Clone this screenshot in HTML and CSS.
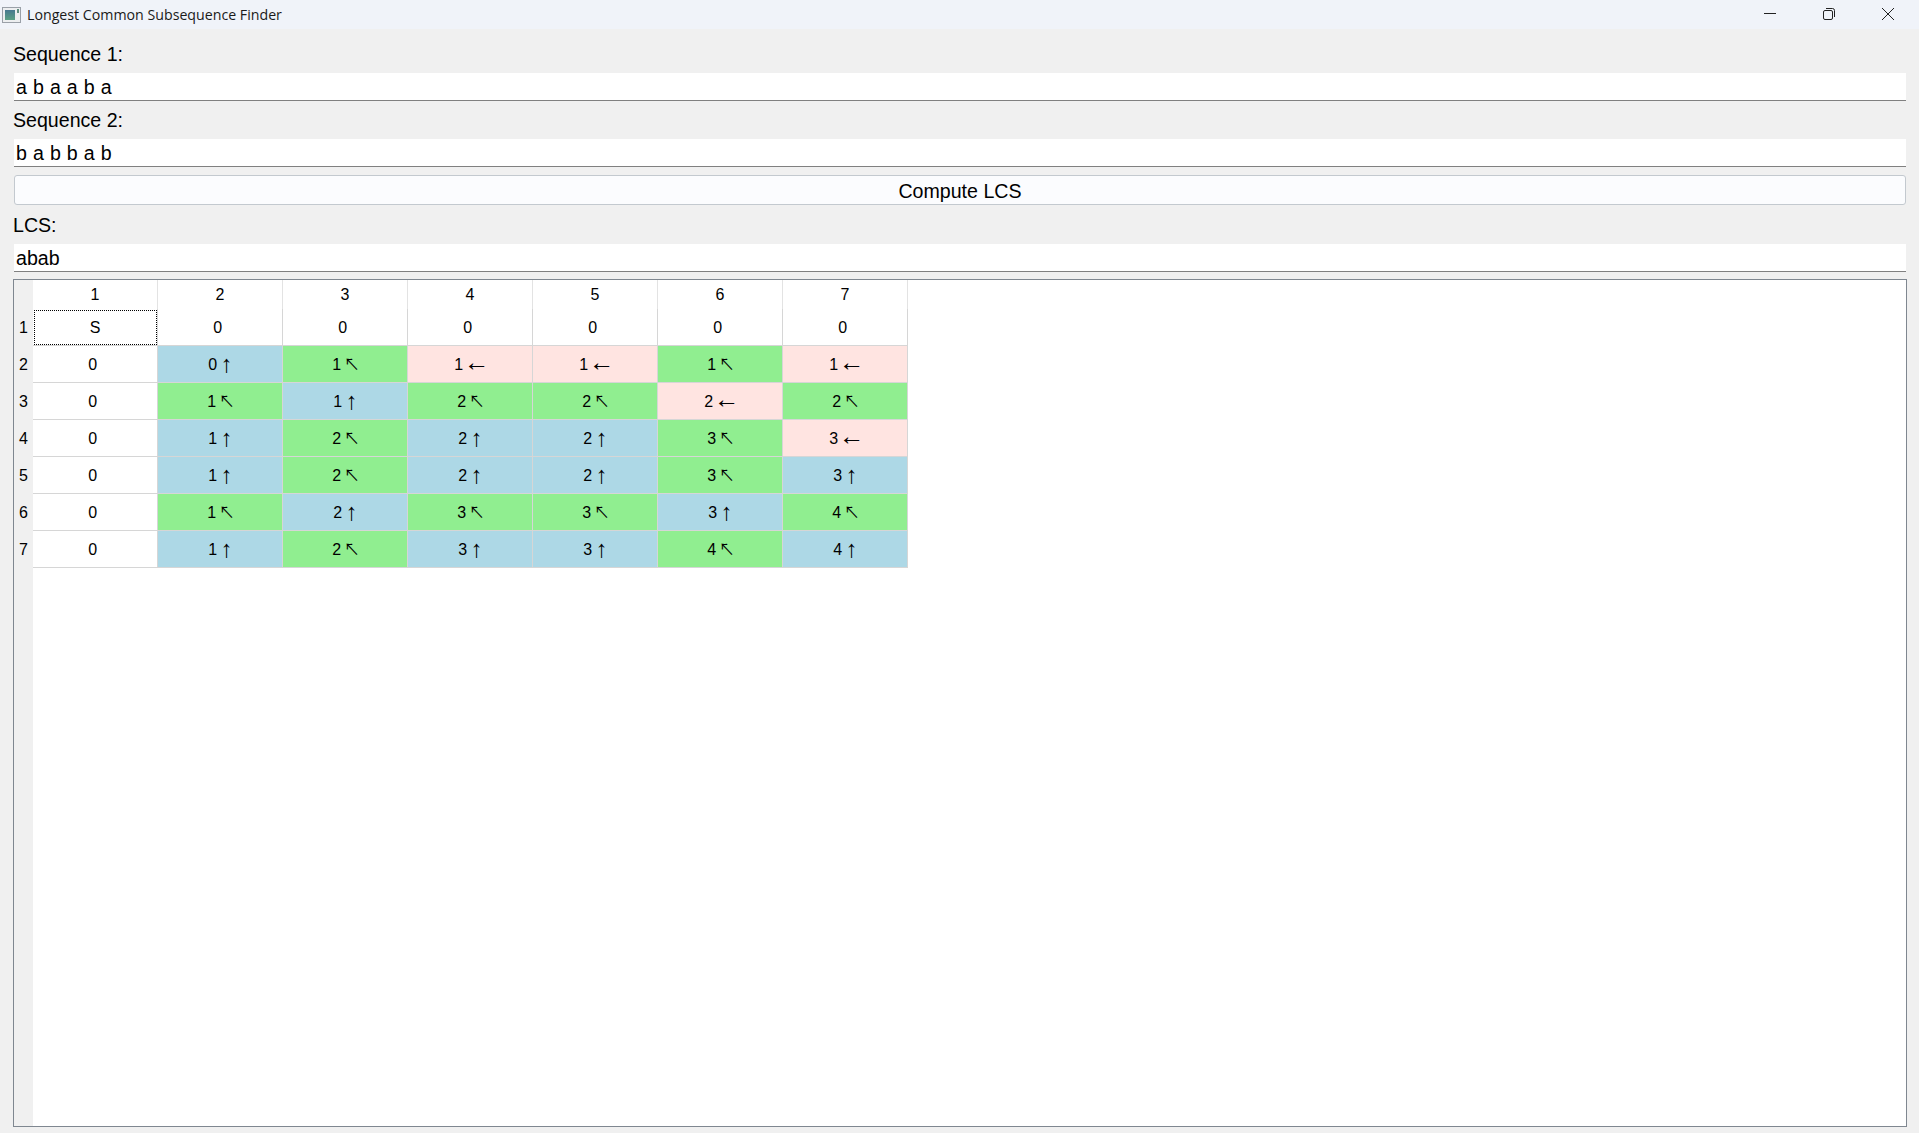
FILE: index.html
```html
<!DOCTYPE html>
<html lang="en">
<head>
    <meta charset="UTF-8">
    <meta name="viewport" content="width=device-width, initial-scale=1.0">
    <title>Longest Common Subsequence Finder</title>
    <link rel="stylesheet" href="styles.css">
</head>
<body>
    <div class="titlebar">
        <svg class="app-icon" width="20" height="18" viewBox="0 0 20 18">
            <defs>
                <linearGradient id="iconFill" x1="0" y1="0" x2="0" y2="1">
                    <stop offset="0" stop-color="#46788f"/>
                    <stop offset="1" stop-color="#5aa084"/>
                </linearGradient>
            </defs>
            <rect x="0.5" y="1.5" width="18" height="15" fill="#eceef0" stroke="#9aa0a8"/>
            <rect x="3" y="4" width="10" height="10" fill="url(#iconFill)"/>
            <rect x="15" y="3" width="2" height="4" fill="#5f8f80"/>
        </svg>
        <span class="window-title">Longest Common Subsequence Finder</span>
        <div class="window-buttons">
            <svg width="12" height="12" viewBox="0 0 12 12"><path d="M0 5.500H12" stroke="#222" fill="none"/></svg>
            <svg width="12" height="12" viewBox="0 0 12 12"><path d="M0.500 4a1.500 1.500 0 0 1 1.500-1.500h6A1.500 1.500 0 0 1 9.500 4v6A1.500 1.500 0 0 1 8 11.500H2A1.500 1.500 0 0 1 0.500 10zM3 0.500h6.500A2 2 0 0 1 11.500 2.500V9" stroke="#222" fill="none"/></svg>
            <svg width="12" height="12" viewBox="0 0 12 12"><path d="M0 0L12 12M12 0L0 12" stroke="#222" fill="none"/></svg>
        </div>
    </div>

    <div class="content">
        <label class="field-label" for="seq1">Sequence 1:</label>
        <input class="field" type="text" id="seq1" value="a b a a b a">

        <label class="field-label" for="seq2">Sequence 2:</label>
        <input class="field" type="text" id="seq2" value="b a b b a b">

        <button class="compute-btn" type="button">Compute LCS</button>

        <label class="field-label lcs-label" for="lcs">LCS:</label>
        <input class="field" type="text" id="lcs" value="abab">

        <div class="table-frame">
            <div class="row-heads">
                <div class="row-head corner"></div>
                <div class="row-head">1</div>
                <div class="row-head">2</div>
                <div class="row-head">3</div>
                <div class="row-head">4</div>
                <div class="row-head">5</div>
                <div class="row-head">6</div>
                <div class="row-head">7</div>
            </div>
            <div class="grid">
                <div class="col-head">1</div>
                <div class="col-head">2</div>
                <div class="col-head">3</div>
                <div class="col-head">4</div>
                <div class="col-head">5</div>
                <div class="col-head">6</div>
                <div class="col-head">7</div>

                <div class="cell focused">S</div>
                <div class="cell">0 </div>
                <div class="cell">0 </div>
                <div class="cell">0 </div>
                <div class="cell">0 </div>
                <div class="cell">0 </div>
                <div class="cell">0 </div>

                <div class="cell">0 </div>
                <div class="cell up">0 <span class="arrow arrow-up">↑</span></div>
                <div class="cell diag">1 <span class="arrow arrow-diag">↖</span></div>
                <div class="cell left">1 <span class="arrow arrow-left">←</span></div>
                <div class="cell left">1 <span class="arrow arrow-left">←</span></div>
                <div class="cell diag">1 <span class="arrow arrow-diag">↖</span></div>
                <div class="cell left">1 <span class="arrow arrow-left">←</span></div>

                <div class="cell">0 </div>
                <div class="cell diag">1 <span class="arrow arrow-diag">↖</span></div>
                <div class="cell up">1 <span class="arrow arrow-up">↑</span></div>
                <div class="cell diag">2 <span class="arrow arrow-diag">↖</span></div>
                <div class="cell diag">2 <span class="arrow arrow-diag">↖</span></div>
                <div class="cell left">2 <span class="arrow arrow-left">←</span></div>
                <div class="cell diag">2 <span class="arrow arrow-diag">↖</span></div>

                <div class="cell">0 </div>
                <div class="cell up">1 <span class="arrow arrow-up">↑</span></div>
                <div class="cell diag">2 <span class="arrow arrow-diag">↖</span></div>
                <div class="cell up">2 <span class="arrow arrow-up">↑</span></div>
                <div class="cell up">2 <span class="arrow arrow-up">↑</span></div>
                <div class="cell diag">3 <span class="arrow arrow-diag">↖</span></div>
                <div class="cell left">3 <span class="arrow arrow-left">←</span></div>

                <div class="cell">0 </div>
                <div class="cell up">1 <span class="arrow arrow-up">↑</span></div>
                <div class="cell diag">2 <span class="arrow arrow-diag">↖</span></div>
                <div class="cell up">2 <span class="arrow arrow-up">↑</span></div>
                <div class="cell up">2 <span class="arrow arrow-up">↑</span></div>
                <div class="cell diag">3 <span class="arrow arrow-diag">↖</span></div>
                <div class="cell up">3 <span class="arrow arrow-up">↑</span></div>

                <div class="cell">0 </div>
                <div class="cell diag">1 <span class="arrow arrow-diag">↖</span></div>
                <div class="cell up">2 <span class="arrow arrow-up">↑</span></div>
                <div class="cell diag">3 <span class="arrow arrow-diag">↖</span></div>
                <div class="cell diag">3 <span class="arrow arrow-diag">↖</span></div>
                <div class="cell up">3 <span class="arrow arrow-up">↑</span></div>
                <div class="cell diag">4 <span class="arrow arrow-diag">↖</span></div>

                <div class="cell">0 </div>
                <div class="cell up">1 <span class="arrow arrow-up">↑</span></div>
                <div class="cell diag">2 <span class="arrow arrow-diag">↖</span></div>
                <div class="cell up">3 <span class="arrow arrow-up">↑</span></div>
                <div class="cell up">3 <span class="arrow arrow-up">↑</span></div>
                <div class="cell diag">4 <span class="arrow arrow-diag">↖</span></div>
                <div class="cell up">4 <span class="arrow arrow-up">↑</span></div>
            </div>
        </div>
    </div>
</body>
</html>
```

FILE: styles.css
```css
* {
    box-sizing: border-box;
}

html, body {
    height: 100%;
}

body {
    margin: 0;
    display: flex;
    flex-direction: column;
    background-color: #f0f0f0;
    color: #000;
    font-family: 'Liberation Sans', Arial, sans-serif;
    overflow: hidden;
}

.titlebar {
    display: flex;
    align-items: center;
    height: 29px;
    padding-left: 2px;
    background-color: #f0f3f9;
}

.app-icon {
    flex: none;
}

.window-title {
    margin-left: 5px;
    font-family: 'Open Sans', sans-serif;
    font-size: 14.2px;
    color: #1a1a1a;
}

.window-buttons {
    display: flex;
    gap: 47px;
    margin-left: auto;
    margin-right: 25px;
    margin-top: -1px;
}

.content {
    flex: 1;
    display: flex;
    flex-direction: column;
    min-height: 0;
    padding: 12px 12px 6px 13px;
}

.field-label {
    display: block;
    height: 26px;
    line-height: 26px;
    font-size: 19.6px;
}

.lcs-label {
    margin-top: 7px;
}

.field {
    display: block;
    width: auto;
    height: 28px;
    margin: 6px 1px 6px 1px;
    padding: 2px 2px 0 2px;
    border: none;
    border-bottom: 1px solid #808080;
    border-radius: 0;
    background-color: #fff;
    color: #000;
    font-family: inherit;
    font-size: 19.6px;
    word-spacing: 0.6px;
    outline: none;
}

.compute-btn {
    height: 30px;
    margin: 2px 1px 0 1px;
    padding: 2px 0 0 0;
    border: 1px solid #c3c9cf;
    border-radius: 3px;
    background-color: #fbfcfe;
    color: #000;
    font-family: inherit;
    font-size: 19.6px;
}

.table-frame {
    flex: 1;
    display: flex;
    min-height: 0;
    margin-top: 1px;
    border: 1px solid #7f8790;
    background-color: #fff;
}

.row-heads {
    flex: none;
    width: 19px;
    background-color: #f0f0f0;
}

.row-head {
    height: 37px;
    line-height: 38px;
    padding-left: 5px;
    font-size: 16px;
}

.row-head.corner {
    height: 29px;
}

.grid {
    display: grid;
    grid-template-columns: repeat(7, 125px);
    grid-template-rows: 29px repeat(7, 37px);
    align-content: start;
}

.col-head, .cell {
    border-right: 1px solid #d6d6d6;
    font-size: 16px;
    text-align: center;
    white-space: pre;
}

.col-head {
    line-height: 29px;
    border-right-color: #e3e3e3;
}

.cell {
    line-height: 38px;
    border-bottom: 1px solid #d6d6d6;
}

.cell.up {
    background-color: #add8e6;
}

.cell.diag {
    background-color: #90ee90;
}

.cell.left {
    background-color: #ffe4e1;
}

.cell.focused {
    outline: 1px dotted #000;
    outline-offset: -2px;
}

/* arrows are sized one by one, the fonts here draw them smaller than the original */
.arrow {
    display: inline-flex;
    justify-content: center;
    line-height: 0;
}

.arrow-up {
    width: 10px;
    font-size: 24px;
    vertical-align: -2px;
}

.arrow-left {
    width: 18px;
    font-size: 25.5px;
    vertical-align: -1px;
}

.arrow-diag {
    width: 12px;
    font-family: 'Noto Sans CJK SC', sans-serif;
    font-size: 16px;
}
```
